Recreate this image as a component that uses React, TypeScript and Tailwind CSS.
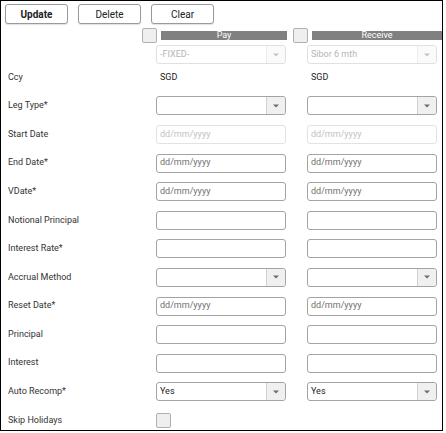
import React from "react";

type Kind = "text" | "select" | "date" | "dateOff" | "check" | "none";

interface row {
  label: string;
  pay: Kind;
  receive: Kind;
  payValue?: string;
  receiveValue?: string;
}

const rows: row[] = [
  { label: "Ccy", pay: "none", receive: "none", payValue: "SGD", receiveValue: "SGD" },
  { label: "Leg Type*", pay: "select", receive: "select" },
  { label: "Start Date", pay: "dateOff", receive: "dateOff" },
  { label: "End Date*", pay: "date", receive: "date" },
  { label: "VDate*", pay: "date", receive: "date" },
  { label: "Notional Principal", pay: "text", receive: "text" },
  { label: "Interest Rate*", pay: "text", receive: "text" },
  { label: "Accrual Method", pay: "select", receive: "select" },
  { label: "Reset Date*", pay: "date", receive: "date" },
  { label: "Principal", pay: "text", receive: "text" },
  { label: "Interest", pay: "text", receive: "text" },
  { label: "Auto Recomp*", pay: "select", receive: "select", payValue: "Yes", receiveValue: "Yes" },
  { label: "Skip Holidays", pay: "check", receive: "none" },
];

function Caret({ light }: { light?: boolean }) {
  return (
    <svg width="6" height="4" viewBox="0 0 6 4">
      <path d="M0 0.5 L6 0.5 L3 3.5 Z" fill={light ? "#c4c4c4" : "#6b6b6b"} />
    </svg>
  );
}

function Select({ value, disabled }: { value?: string; disabled?: boolean }) {
  return (
    <div
      className={`flex h-[19px] w-[130px] items-stretch rounded-[3px] border bg-white ${
        disabled ? "border-[#e0e0e0]" : "border-[#a3a3a3]"
      }`}
    >
      <span className={`flex flex-1 items-center pl-[3px] text-[9px] ${disabled ? "text-[#b5b5b5]" : "text-[#222]"}`}>
        {value}
      </span>
      <span
        className={`flex w-[19px] items-center justify-center rounded-r-[3px] border-l ${
          disabled ? "border-[#ececec] bg-[#fafafa]" : "border-[#d0d0d0] bg-[#f0f0f0]"
        }`}
      >
        <Caret light={disabled} />
      </span>
    </div>
  );
}

function Field({ kind, value }: { kind: Kind; value?: string }) {
  if (kind === "select") return <Select value={value} />;
  if (kind === "check") return <div className="h-[15px] w-[15px] rounded-[2px] border border-[#b0b0b0] bg-[#efefef]" />;
  if (kind === "none") return <span className="pl-[4px] text-[9px] text-[#222]">{value}</span>;
  const off = kind === "dateOff";
  return (
    <div
      className={`flex h-[19px] w-[130px] items-center rounded-[3px] border bg-white pl-[3px] text-[9px] ${
        off ? "border-[#e2e2e2] text-[#c2c2c2]" : "border-[#a3a3a3] text-[#6f6f6f]"
      }`}
    >
      {kind === "text" ? "" : "dd/mm/yyyy"}
    </div>
  );
}

export default function App(): React.JSX.Element {
  return (
    <div className="bg-white" style={{ fontFamily: "Roboto, 'Liberation Sans', sans-serif" }}>
      <div className="h-[431px] w-[443px] overflow-hidden border border-black">
        <div className="flex gap-[10px] pl-[4px] pt-[3px]">
          <button className="h-[20px] w-[63px] rounded-[3px] border border-[#9a9a9a] bg-white text-[10px] font-bold text-[#222] shadow-[0_1px_1px_rgba(0,0,0,0.12)]">
            Update
          </button>
          <button className="h-[20px] w-[63px] rounded-[3px] border border-[#9a9a9a] bg-white text-[10px] text-[#222] shadow-[0_1px_1px_rgba(0,0,0,0.12)]">
            Delete
          </button>
          <button className="h-[20px] w-[63px] rounded-[3px] border border-[#9a9a9a] bg-white text-[10px] text-[#222] shadow-[0_1px_1px_rgba(0,0,0,0.12)]">
            Clear
          </button>
        </div>

        <div className="mt-[1px] flex h-[20px] items-center pl-[141px]">
          <div className="h-[15px] w-[15px] rounded-[2px] border border-[#b0b0b0] bg-[#efefef]" />
          <div className="ml-[4px] flex h-[9px] w-[126px] items-center justify-center bg-[#808080] text-[9px] leading-none text-white">
            Pay
          </div>
          <div className="ml-[6px] h-[15px] w-[15px] rounded-[2px] border border-[#b0b0b0] bg-[#efefef]" />
          <div className="ml-[4px] flex h-[9px] flex-1 items-center justify-center bg-[#808080] text-[9px] leading-none text-white">
            Receive
          </div>
        </div>

        <div className="grid h-[18px] grid-cols-[134px_130px_130px] items-center gap-x-[21px]">
          <span />
          <Select value="-FIXED-" disabled />
          <Select value="Sibor 6 mth" disabled />
        </div>

        {rows.map((r) => (
          <div key={r.label} className="grid h-[28.6px] grid-cols-[134px_130px_130px] items-center gap-x-[21px]">
            <span className="pl-[7px] text-[9px] text-[#333]">{r.label}</span>
            <Field kind={r.pay} value={r.payValue} />
            <Field kind={r.receive} value={r.receiveValue} />
          </div>
        ))}
      </div>
    </div>
  );
}
